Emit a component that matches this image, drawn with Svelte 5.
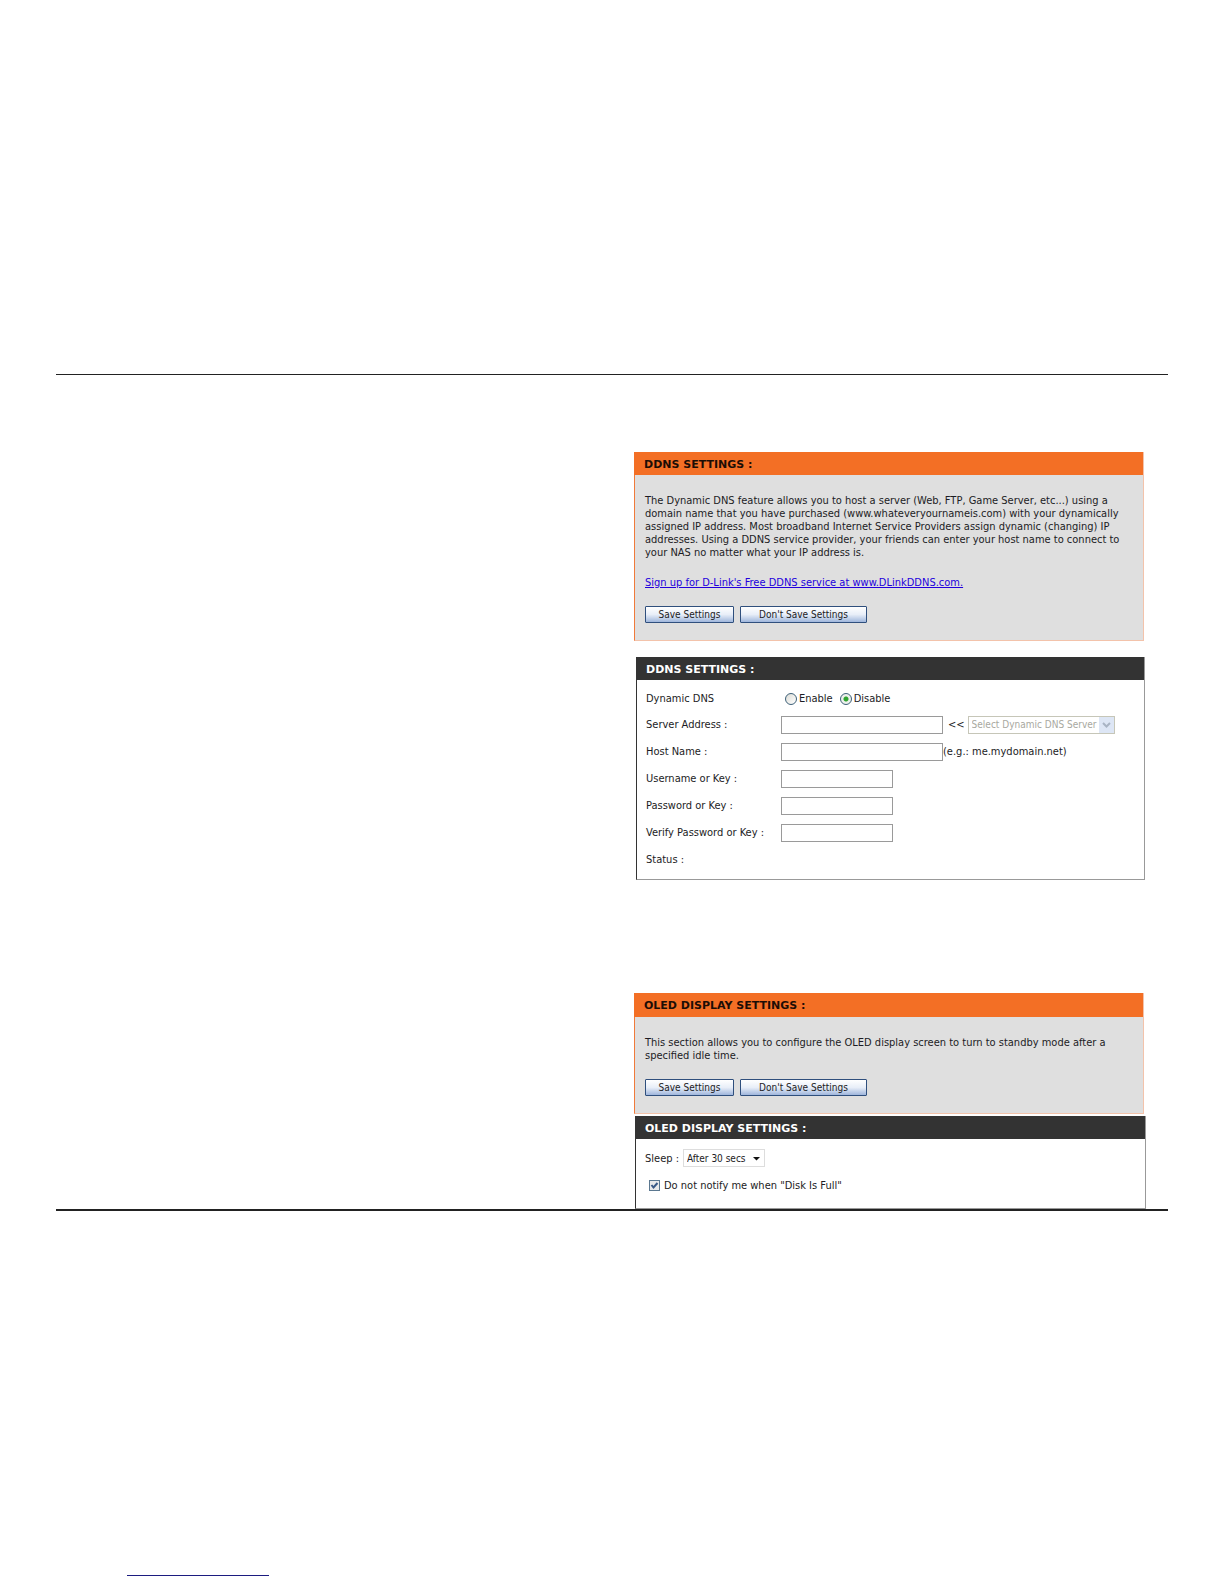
<script>
    let ddns = 'disable';
    let server = '';
    let host = '';
    let username = '';
    let password = '';
    let verify = '';
    let sleep = '30';
    let silent = true;
</script>

<style>
    :global(body) {
        background: #fff;
    }

    .page {
        padding: 374px 56px 8px;
        font-family: "DejaVu Sans Condensed", "DejaVu Sans", sans-serif;
        font-size: 11px;
        line-height: 13px;
        color: #1c1c24;
    }

    .sheet {
        display: grid;
        grid-template-columns: 1fr 510px;
        border-top: 1px solid #222;
        border-bottom: 2px solid #222;
        padding: 77px 24px 0 0;
    }

    .panels {
        grid-column: 2;
    }

    .panel {
        border: 1px solid #999;
        border-left-color: #333;
        border-top: none;
    }

    .intro {
        background: #dfdfdf;
        border-color: #f3c3ab;
        border-left-color: #f07a3a;
    }

    .form {
        margin: 16px -1px 0 2px;
    }

    .oled {
        margin-top: 113px;
    }

    .display {
        margin: 2px -2px 0 1px;
    }

    h2 {
        margin: 0 0 0 -1px;
        padding: 2px 10px 0;
        font-family: "DejaVu Sans", sans-serif;
        font-size: 11px;
        font-weight: bold;
        line-height: 21px;
        color: #fff;
        background: #333;
    }

    .intro h2 {
        color: #1c0d05;
        background: #f36f25;
    }

    .oled h2 {
        padding-bottom: 1px;
    }

    .text {
        padding: 19px 10px 17px;
        white-space: nowrap;
    }

    p {
        margin: 0 0 17px;
    }

    a {
        color: #2200dd;
    }

    .buttons {
        display: flex;
        gap: 6px;
    }

    button {
        width: 89px;
        height: 17px;
        padding: 0;
        border: 1px solid #2f4f7d;
        border-radius: 1px;
        background: linear-gradient(#fff, #e8eef8 50%, #9fb6dc);
        font-family: "DejaVu Sans Condensed", sans-serif;
        font-size: 10px;
        line-height: 13px;
        color: #1c1c24;
    }

    button.wide {
        width: 127px;
    }

    .rows {
        padding: 6px 9px;
    }

    .row {
        display: grid;
        grid-template-columns: 135px 1fr;
        align-items: center;
        height: 27px;
    }

    .row:first-child {
        height: 25px;
    }

    .field {
        display: flex;
        align-items: center;
    }

    .radios {
        padding-left: 4px;
        gap: 2px;
    }

    .radios label + input {
        margin-left: 5px;
    }

    input[type="text"],
    input[type="password"] {
        box-sizing: border-box;
        width: 112px;
        height: 18px;
        padding: 0 3px;
        border: 1px solid #9a9a9a;
        background: #fff;
        font-size: 11px;
    }

    input.long {
        width: 162px;
    }

    input[type="radio"] {
        appearance: none;
        width: 12px;
        height: 12px;
        margin: 0;
        border: 1px solid #3d6078;
        border-radius: 50%;
        background: linear-gradient(135deg, #dcdcd6, #fff);
    }

    input[type="radio"]:checked {
        background: radial-gradient(circle, #2fa52f 0, #2fa52f 2px, #eef0ec 3px);
    }

    .arrows {
        padding: 0 3px 0 5px;
    }

    .select {
        position: relative;
        display: flex;
    }

    select {
        appearance: none;
        box-sizing: border-box;
        height: 18px;
        padding: 0 3px;
        border: 1px solid #ddd;
        border-radius: 0;
        background: #fff;
        font-family: "DejaVu Sans Condensed", sans-serif;
        font-size: 10px;
        color: #1c1c24;
    }

    .servers select {
        width: 147px;
        border-color: #c6c6b8;
        color: #a8a8a0;
        opacity: 1;
    }

    .select svg {
        position: absolute;
        top: 1px;
        right: 1px;
        pointer-events: none;
    }

    .sleep {
        display: flex;
        align-items: center;
        gap: 4px;
    }

    .sleep select {
        width: 82px;
    }

    .body {
        padding: 10px 9px 16px;
    }

    .check {
        display: flex;
        align-items: center;
        gap: 4px;
        margin: 12px 0 0 4px;
    }

    .tick {
        position: relative;
        display: flex;
    }

    input[type="checkbox"] {
        appearance: none;
        width: 11px;
        height: 11px;
        margin: 0;
        border: 1px solid #5b7890;
        background: #e9eaea;
        box-sizing: border-box;
    }

    .tick svg {
        position: absolute;
        top: 0;
        left: 0;
        pointer-events: none;
    }

    .footer {
        width: 142px;
        height: 1px;
        margin: 364px 0 0 71px;
        background: #1c1c80;
    }
</style>

<div class="page">
    <div class="sheet">
        <div class="panels">
            <section class="panel intro">
                <h2>DDNS SETTINGS :</h2>
                <div class="text">
                    <p>
                        The Dynamic DNS feature allows you to host a server (Web, FTP, Game Server, etc...) using a<br>
                        domain name that you have purchased (www.whateveryournameis.com) with your dynamically<br>
                        assigned IP address. Most broadband Internet Service Providers assign dynamic (changing) IP<br>
                        addresses. Using a DDNS service provider, your friends can enter your host name to connect to<br>
                        your NAS no matter what your IP address is.
                    </p>
                    <p><a href="http://www.DLinkDDNS.com">Sign up for D-Link's Free DDNS service at www.DLinkDDNS.com.</a></p>
                    <div class="buttons">
                        <button type="button">Save Settings</button>
                        <button type="button" class="wide">Don't Save Settings</button>
                    </div>
                </div>
            </section>

            <section class="panel form">
                <h2>DDNS SETTINGS :</h2>
                <div class="rows">
                    <div class="row">
                        <span>Dynamic DNS</span>
                        <div class="field radios">
                            <input type="radio" id="enable" name="ddns" value="enable" bind:group={ddns}>
                            <label for="enable">Enable</label>
                            <input type="radio" id="disable" name="ddns" value="disable" bind:group={ddns}>
                            <label for="disable">Disable</label>
                        </div>
                    </div>
                    <div class="row">
                        <label for="server">Server Address :</label>
                        <div class="field">
                            <input class="long" type="text" id="server" bind:value={server}>
                            <span class="arrows">&lt;&lt;</span>
                            <div class="select servers">
                                <select aria-label="Dynamic DNS Server" disabled>
                                    <option>Select Dynamic DNS Server</option>
                                </select>
                                <svg width="15" height="16" viewBox="0 0 15 16">
                                    <rect x="0" y="0" width="15" height="16" fill="#dde6f5" />
                                    <path d="M4 6l3.5 3.5L11 6" fill="none" stroke="#a9b4c4" stroke-width="2" />
                                </svg>
                            </div>
                        </div>
                    </div>
                    <div class="row">
                        <label for="host">Host Name :</label>
                        <div class="field">
                            <input class="long" type="text" id="host" bind:value={host}>
                            <span>(e.g.: me.mydomain.net)</span>
                        </div>
                    </div>
                    <div class="row">
                        <label for="username">Username or Key :</label>
                        <div class="field"><input type="text" id="username" bind:value={username}></div>
                    </div>
                    <div class="row">
                        <label for="password">Password or Key :</label>
                        <div class="field"><input type="password" id="password" bind:value={password}></div>
                    </div>
                    <div class="row">
                        <label for="verify">Verify Password or Key :</label>
                        <div class="field"><input type="password" id="verify" bind:value={verify}></div>
                    </div>
                    <div class="row">
                        <span>Status :</span>
                    </div>
                </div>
            </section>

            <section class="panel intro oled">
                <h2>OLED DISPLAY SETTINGS :</h2>
                <div class="text">
                    <p>
                        This section allows you to configure the OLED display screen to turn to standby mode after a<br>
                        specified idle time.
                    </p>
                    <div class="buttons">
                        <button type="button">Save Settings</button>
                        <button type="button" class="wide">Don't Save Settings</button>
                    </div>
                </div>
            </section>

            <section class="panel display">
                <h2>OLED DISPLAY SETTINGS :</h2>
                <div class="body">
                    <div class="sleep">
                        <label for="sleep">Sleep :</label>
                        <div class="select">
                            <select id="sleep" bind:value={sleep}>
                                <option value="30">After 30 secs</option>
                            </select>
                            <svg width="15" height="16" viewBox="0 0 15 16">
                                <path d="M4 7h7l-3.5 3.5z" fill="#111" />
                            </svg>
                        </div>
                    </div>
                    <div class="check">
                        <div class="tick">
                            <input type="checkbox" id="silent" bind:checked={silent}>
                            {#if silent}
                                <svg width="11" height="11" viewBox="0 0 11 11">
                                    <path d="M2.5 5l2 2.5L8.500 3" fill="none" stroke="#3a5a86" stroke-width="2" />
                                </svg>
                            {/if}
                        </div>
                        <label for="silent">Do not notify me when "Disk Is Full"</label>
                    </div>
                </div>
            </section>
        </div>
    </div>
    <div class="footer"></div>
</div>
